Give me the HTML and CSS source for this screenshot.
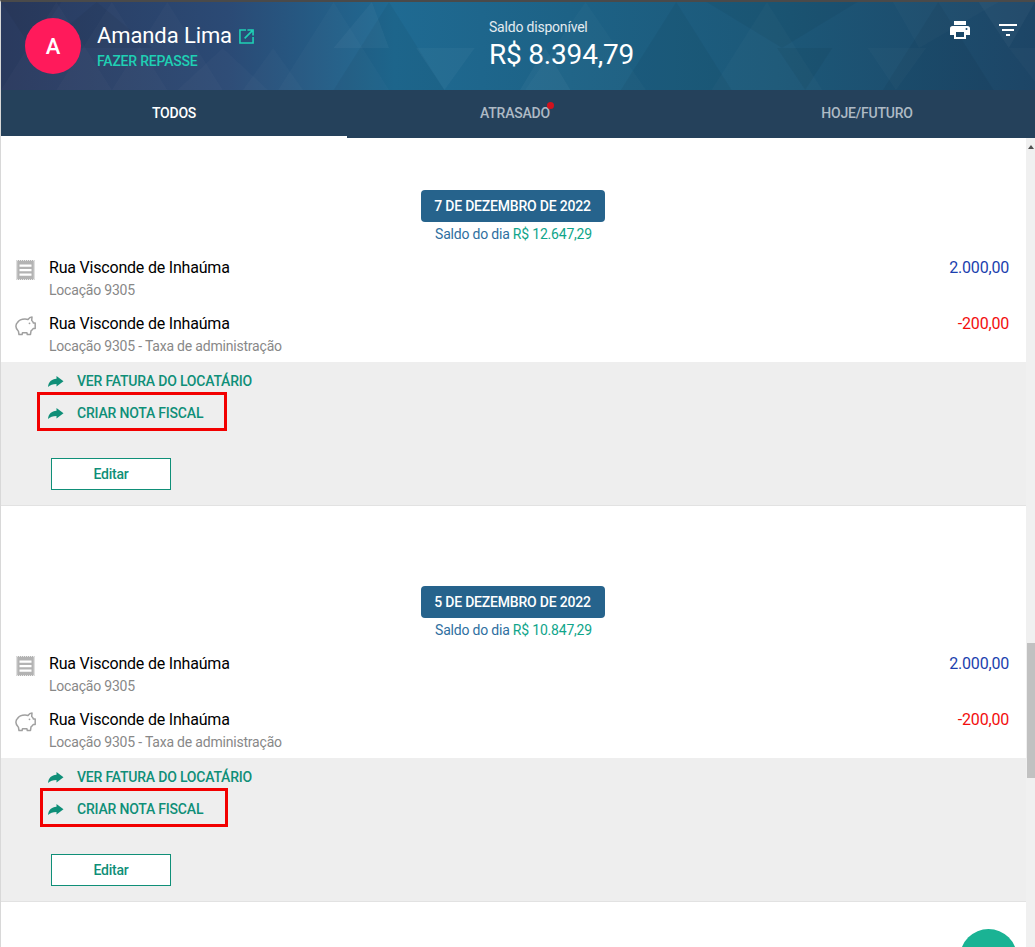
FILE: index.html
```html
<!DOCTYPE html>
<html lang="pt-BR">
<head>
<meta charset="utf-8">
<title>Extrato</title>
<link rel="stylesheet" href="styles.css">
</head>
<body>
<div class="app">
  <header class="top">
    <svg class="pattern" viewBox="0 0 1026 88" preserveAspectRatio="none" aria-hidden="true">
      <g fill="#ffffff" fill-opacity="0.018">
        <polygon points="55,0 110,88 0,88"/>
        <polygon points="110,0 165,88 55,88"/>
        <polygon points="165,0 220,88 110,88"/>
        <polygon points="220,46 265,88 175,88"/>
        <polygon points="270,46 300,88 240,88"/>
        <polygon points="330,0 385,88 275,88"/>
        <polygon points="580,0 640,88 520,88"/>
        <polygon points="760,0 815,88 705,88"/>
        <polygon points="885,0 990,0 911,46"/>
        <polygon points="860,46 918,46 888,88"/>
        <polygon points="1000,46 1026,46 1026,80"/>
      </g>
      <g fill="#000000" fill-opacity="0.045">
        <polygon points="0,0 60,0 30,46"/>
        <polygon points="95,0 150,46 40,46"/>
        <polygon points="385,0 440,88 330,88"/>
        <polygon points="670,0 725,88 615,88"/>
        <polygon points="770,46 825,46 798,88"/>
        <polygon points="930,0 985,88 875,88"/>
        <polygon points="700,0 850,0 775,46"/>
      </g>
      <g fill="#ffffff" fill-opacity="0.035">
        <polygon points="412,46 470,46 440,88"/>
        <polygon points="540,46 565,88 515,88"/>
        <polygon points="330,46 368,0 385,46"/>
        <polygon points="970,0 1026,0 1000,46"/>
      </g>
    </svg>
    <div class="top-main">
      <div class="avatar">A</div>
      <div class="person">
        <div class="person-name">
          <span>Amanda Lima</span>
          <svg class="ext" viewBox="0 0 16 16" aria-hidden="true">
            <path d="M7.500 1H1v14h14V8.500" fill="none" stroke="currentColor" stroke-width="1.700"/>
            <path d="M6 10L14 2M9 1h6v6" fill="none" stroke="currentColor" stroke-width="1.700"/>
          </svg>
        </div>
        <div class="repasse">FAZER REPASSE</div>
      </div>
      <div class="balance">
        <div class="balance-label">Saldo disponível</div>
        <div class="balance-value">R$ 8.394,79</div>
      </div>
      <div class="actions">
        <svg class="print" viewBox="0 0 20 18" aria-hidden="true">
          <path d="M4 0h12v4H4zM2.500 5h15A2.500 2.500 0 0 1 20 7.500V14h-4v4H4v-4H0V7.500A2.500 2.500 0 0 1 2.500 5zM6 11v5h8v-5zM16.500 7a1 1 0 1 0 0 2 1 1 0 0 0 0-2z" fill="#fff" fill-rule="evenodd"/>
        </svg>
        <svg class="filter" viewBox="0 0 18 12" aria-hidden="true">
          <path d="M0 0h18v2H0zM3 5h12v2H3zM7 10h4v2H7z" fill="#fff"/>
        </svg>
      </div>
    </div>
    <nav class="tabs">
      <div class="tab tab-active">TODOS</div>
      <div class="tab tab-late"><span class="tab-label">ATRASADO<i class="dot"></i></span></div>
      <div class="tab tab-next">HOJE/FUTURO</div>
    </nav>
  </header>

  <div class="body">
    <main class="list">
      <section class="day">
        <div class="day-head">
          <div class="pill">7 DE DEZEMBRO DE 2022</div>
          <div class="day-balance">Saldo do dia <span class="green">R$ 12.647,29</span></div>
        </div>
        <div class="row">
          <svg class="row-icon" viewBox="0 0 21 20" aria-hidden="true"><path d="M1.500 0h18v20h-18zM4.500 4.500v2.200h12V4.500zM4.500 9v2.200h12V9zM4.500 13.500v2.200h12v-2.200z" fill="#b3b3b3" fill-rule="evenodd"/><rect x="2" y=".5" width="17" height="19" fill="none" stroke="#fff" stroke-opacity=".7" stroke-dasharray="1 1"/></svg>
          <div class="row-text"><div class="row-title">Rua Visconde de Inhaúma</div><div class="row-sub">Locação 9305</div></div>
          <div class="amount in">2.000,00</div>
        </div>
        <div class="row">
          <svg class="row-icon" viewBox="0 0 21 20" aria-hidden="true"><path d="M2.500 6.500C4 4 7 3 10 3c1 0 2 .1 3 .5C14 2 15.500 1 17 1l-.3 3.500c.8.6 1.400 1.400 1.700 2.500h1.800v5.500h-2c-.5 1-1.200 1.700-2.200 2.300l-.5 3.700h-3.200l-.4-1.800H7.500l-.4 1.800H4l-.6-3.300C1.500 13.500.7 11.500 1 9.500c.1-1.200.6-2.200 1.500-3z" fill="none" stroke="#a0a0a0" stroke-width="1.500" stroke-linejoin="round"/><circle cx="14.500" cy="7.300" r=".9" fill="#a0a0a0"/></svg>
          <div class="row-text"><div class="row-title">Rua Visconde de Inhaúma</div><div class="row-sub">Locação 9305 - Taxa de administração</div></div>
          <div class="amount out">-200,00</div>
        </div>
        <div class="panel">
          <a class="link"><svg class="arrow" viewBox="0 0 16 11" aria-hidden="true"><path d="M8.500 0L15.500 5.300 8.500 10.600V8C5 8 2 9 0 11 .5 6 3.500 3.100 8.500 2.800z" fill="#0f8f78"/></svg>VER FATURA DO LOCATÁRIO</a>
          <a class="link"><svg class="arrow" viewBox="0 0 16 11" aria-hidden="true"><path d="M8.500 0L15.500 5.300 8.500 10.600V8C5 8 2 9 0 11 .5 6 3.500 3.100 8.500 2.800z" fill="#0f8f78"/></svg>CRIAR NOTA FISCAL</a>
          <button class="edit">Editar</button>
          <div class="mark mark-one"></div>
        </div>
      </section>
      <section class="day">
        <div class="day-head">
          <div class="pill">5 DE DEZEMBRO DE 2022</div>
          <div class="day-balance">Saldo do dia <span class="green">R$ 10.847,29</span></div>
        </div>
        <div class="row">
          <svg class="row-icon" viewBox="0 0 21 20" aria-hidden="true"><path d="M1.500 0h18v20h-18zM4.500 4.500v2.200h12V4.500zM4.500 9v2.200h12V9zM4.500 13.500v2.200h12v-2.200z" fill="#b3b3b3" fill-rule="evenodd"/><rect x="2" y=".5" width="17" height="19" fill="none" stroke="#fff" stroke-opacity=".7" stroke-dasharray="1 1"/></svg>
          <div class="row-text"><div class="row-title">Rua Visconde de Inhaúma</div><div class="row-sub">Locação 9305</div></div>
          <div class="amount in">2.000,00</div>
        </div>
        <div class="row">
          <svg class="row-icon" viewBox="0 0 21 20" aria-hidden="true"><path d="M2.500 6.500C4 4 7 3 10 3c1 0 2 .1 3 .5C14 2 15.500 1 17 1l-.3 3.500c.8.6 1.400 1.400 1.700 2.500h1.800v5.500h-2c-.5 1-1.200 1.700-2.200 2.300l-.5 3.700h-3.200l-.4-1.800H7.500l-.4 1.800H4l-.6-3.300C1.500 13.500.7 11.500 1 9.500c.1-1.200.6-2.200 1.500-3z" fill="none" stroke="#a0a0a0" stroke-width="1.500" stroke-linejoin="round"/><circle cx="14.500" cy="7.300" r=".9" fill="#a0a0a0"/></svg>
          <div class="row-text"><div class="row-title">Rua Visconde de Inhaúma</div><div class="row-sub">Locação 9305 - Taxa de administração</div></div>
          <div class="amount out">-200,00</div>
        </div>
        <div class="panel">
          <a class="link"><svg class="arrow" viewBox="0 0 16 11" aria-hidden="true"><path d="M8.500 0L15.500 5.300 8.500 10.600V8C5 8 2 9 0 11 .5 6 3.500 3.100 8.500 2.800z" fill="#0f8f78"/></svg>VER FATURA DO LOCATÁRIO</a>
          <a class="link"><svg class="arrow" viewBox="0 0 16 11" aria-hidden="true"><path d="M8.500 0L15.500 5.300 8.500 10.600V8C5 8 2 9 0 11 .5 6 3.500 3.100 8.500 2.800z" fill="#0f8f78"/></svg>CRIAR NOTA FISCAL</a>
          <button class="edit">Editar</button>
          <div class="mark mark-two"></div>
        </div>
      </section>
      <div class="fab"></div>
    </main>
    <aside class="scrollbar">
      <div class="scroll-up"></div>
      <div class="scroll-thumb"></div>
    </aside>
  </div>
</div>
</body>
</html>
```
FILE: styles.css
```css
* { box-sizing: border-box; }
html, body { margin: 0; height: 100%; overflow: hidden; }
body { font-family: Roboto, "Liberation Sans", sans-serif; background: #fff; color: #000; letter-spacing: -0.2px; }
.app { height: 947px; display: flex; flex-direction: column; border-top: 2px solid #4a4a4a; border-left: 1px solid #d8d8d8; }

.top { position: relative; flex: none; background: linear-gradient(90deg, #2a3a5e 0%, #2b4a75 22%, #1f6a92 38%, #1d6286 55%, #1c5878 75%, #1d4566 100%); }
.pattern { position: absolute; left: 0; top: 0; width: 100%; height: 88px; }
.top-main { position: relative; height: 88px; display: flex; padding-left: 24px; }
.avatar { flex: none; width: 56px; height: 56px; margin-top: 16px; border-radius: 50%; background: #ff1a5b; color: #fff; font-size: 22px; font-weight: 500; display: flex; align-items: center; justify-content: center; }
.person { width: 408px; padding: 19px 0 0 16px; flex: none; }
.person-name { display: flex; align-items: center; color: #fff; font-size: 22px; line-height: 30px; gap: 7px; letter-spacing: -0.1px; }
.ext { width: 15px; height: 15px; color: #1fd0b4; margin-top: 1px; }
.repasse { color: #1fd0b4; font-size: 14px; font-weight: 500; line-height: 20px; }
.balance { flex: none; width: 400px; padding-top: 15px; color: #fff; }
.balance-label { font-size: 14px; line-height: 20px; color: #e3ebf0; }
.balance-value { font-size: 28px; line-height: 34px; margin-top: 1px; }
.actions { flex: 1; display: flex; align-items: flex-start; padding-top: 19px; }
.print { width: 20px; height: 18px; margin-left: 61px; }
.filter { width: 18px; height: 12px; margin: 3px 0 0 29px; }

.tabs { position: relative; height: 48px; display: flex; background: #25415b; }
.tab { flex: 1; display: flex; align-items: center; justify-content: center; color: #aebac5; font-size: 14px; font-weight: 500; padding-bottom: 2px; }
.tab-active { flex: none; width: 346px; color: #fff; border-bottom: 2px solid #fff; padding-bottom: 0; }
.tab-late { padding-right: 8px; }
.tab-next { padding-left: 8px; }
.tab-label { position: relative; }
.dot { position: absolute; right: -4px; top: -3px; width: 7px; height: 7px; border-radius: 50%; background: #d0121e; }

.body { flex: 1; min-height: 0; display: flex; }
.list { position: relative; flex: 1; min-width: 0; overflow: hidden; padding-top: 52px; }
.day + .day { margin-top: 80px; }
.day-head { display: flex; flex-direction: column; align-items: center; padding-bottom: 4px; }
.pill { width: 184px; height: 32px; margin-right: 2px; border-radius: 4px; background: #26638c; color: #fff; font-size: 14px; font-weight: 500; display: flex; align-items: center; justify-content: center; }
.day-balance { color: #2f6f9f; font-size: 14px; line-height: 24px; }
.green { color: #0fa58a; }
.row { display: flex; height: 56px; padding: 0 17px 0 14px; }
.row-icon { flex: none; width: 21px; height: 20px; margin-top: 10px; }
.row-text { flex: 1; padding-left: 13px; }
.row-title { font-size: 16px; line-height: 20px; margin-top: 8px; }
.row-sub { font-size: 14px; line-height: 20px; margin-top: 2px; color: #888; }
.amount { font-size: 16px; line-height: 20px; margin-top: 8px; }
.in { color: #1b3fae; }
.out { color: #f20d0d; }

.panel { position: relative; height: 144px; padding: 3px 0 0 47px; background: #eee; border-bottom: 1px solid #e2e2e2; }
.link { display: flex; align-items: center; height: 32px; color: #0f8f78; font-size: 14px; font-weight: 500; }
.arrow { width: 16px; height: 11px; margin-right: 13px; }
.edit { display: block; width: 120px; height: 32px; margin: 29px 0 0 3px; background: #fff; border: 1px solid #0f8f78; color: #0f8f78; font: 500 14px Roboto, sans-serif; letter-spacing: -0.2px; padding: 0; }
.mark { position: absolute; height: 39px; border: 3px solid #f20000; }
.mark-one { left: 36px; top: 30px; width: 190px; }
.mark-two { left: 39px; top: 30px; width: 188px; }

.fab { position: absolute; left: 959px; top: 791px; width: 57px; height: 57px; border-radius: 50%; background: #1ab394; }

.scrollbar { position: relative; flex: none; width: 9px; background: #f0f0f0; }
.scroll-up { position: absolute; left: 2px; top: 7px; border-left: 3px solid transparent; border-right: 3px solid transparent; border-bottom: 4px solid #505050; }
.scroll-thumb { position: absolute; left: 1px; right: 0; top: 505px; height: 135px; background: #c1c1c1; }
```
